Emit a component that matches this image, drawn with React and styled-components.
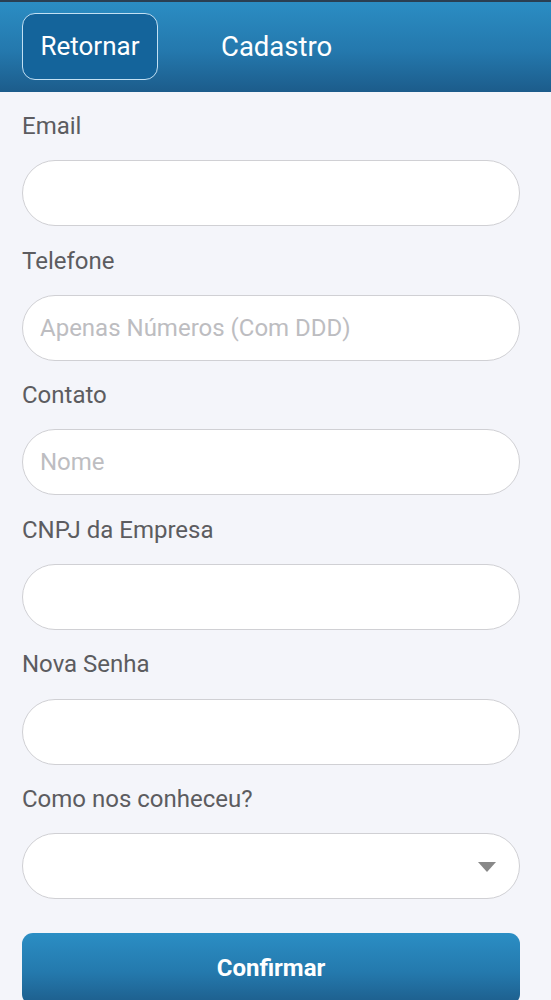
import React from "react";
import styled, { createGlobalStyle } from "styled-components";

const Global = createGlobalStyle`
  html, body { margin: 0; padding: 0; background: #f4f5fa; }
  body { font-family: Roboto, "Noto Sans", sans-serif; }
  * { box-sizing: border-box; }
`;

const Page = styled.div`
  width: 551px;
  min-height: 1000px;
  background: #f4f5fa;
  overflow: hidden;
`;

const Header = styled.header`
  height: 92px;
  border-top: 2px solid #2a3f52;
  background: linear-gradient(180deg, #2b8dc3 0%, #2478ad 55%, #1c5c8b 100%);
  display: flex;
  align-items: center;
  padding: 0 0 2px 22px;
  gap: 63px;
`;

const BackButton = styled.button`
  width: 136px;
  height: 67px;
  border: 1.5px solid #c2e0f3;
  border-radius: 13px;
  background: #14649b;
  color: #ffffff;
  font-family: Roboto, sans-serif;
  font-size: 26px;
  padding: 0;
`;

const Title = styled.h1`
  margin: 0;
  color: #ffffff;
  font-family: Roboto, sans-serif;
  font-weight: 400;
  font-size: 27.5px;
`;

const Form = styled.form`
  display: flex;
  flex-direction: column;
  padding: 21px 31px 0 22px;
`;

const Field = styled.div`
  display: flex;
  flex-direction: column;
  gap: 21.3px;
  margin-bottom: 21.3px;
`;

const Label = styled.label`
  font-size: 24px;
  line-height: 26px;
  color: #5c5c60;
`;

const Input = styled.input`
  height: 66px;
  width: 100%;
  border: 1.5px solid #d0d0d4;
  border-radius: 33px;
  background: #ffffff;
  padding: 0 17px;
  font-family: Roboto, sans-serif;
  font-size: 24px;
  color: #333;
  outline: none;
  &::placeholder { color: #bdbdc1; }
`;

const SelectBox = styled.div`
  position: relative;
  height: 66px;
  width: 100%;
  border: 1.5px solid #d0d0d4;
  border-radius: 33px;
  background: #ffffff;
`;

const Arrow = styled.span`
  position: absolute;
  right: 23px;
  top: 28px;
  width: 0;
  height: 0;
  border-left: 9px solid transparent;
  border-right: 9px solid transparent;
  border-top: 10px solid #888888;
`;

const Confirm = styled.button`
  margin-top: 12px;
  height: 72px;
  width: 100%;
  border: none;
  border-radius: 11px;
  background: linear-gradient(180deg, #2b8ec4 0%, #2479ad 55%, #1d5d8b 100%);
  color: #ffffff;
  font-family: Roboto, sans-serif;
  font-weight: 700;
  font-size: 24px;
  padding: 0 0 2px;
`;

const fields = [
  { label: "Email", placeholder: "" },
  { label: "Telefone", placeholder: "Apenas Números (Com DDD)" },
  { label: "Contato", placeholder: "Nome" },
  { label: "CNPJ da Empresa", placeholder: "" },
  { label: "Nova Senha", placeholder: "" },
];

export default function App() {
  return (
    <Page>
      <Global />
      <Header>
        <BackButton type="button">Retornar</BackButton>
        <Title>Cadastro</Title>
      </Header>
      <Form onSubmit={(e) => e.preventDefault()}>
        {fields.map((f) => (
          <Field key={f.label}>
            <Label>{f.label}</Label>
            <Input placeholder={f.placeholder} />
          </Field>
        ))}
        <Field>
          <Label>Como nos conheceu?</Label>
          <SelectBox>
            <Arrow />
          </SelectBox>
        </Field>
        <Confirm type="submit">Confirmar</Confirm>
      </Form>
    </Page>
  );
}
